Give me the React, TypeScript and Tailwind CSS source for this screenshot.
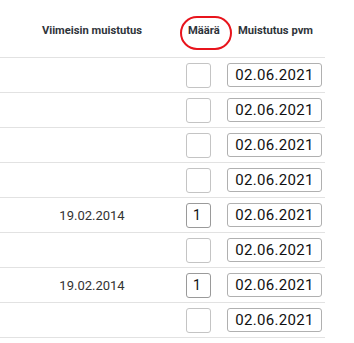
import React from "react";

const rows: { last: string; qty: string }[] = [
  { last: "", qty: "" },
  { last: "", qty: "" },
  { last: "", qty: "" },
  { last: "", qty: "" },
  { last: "19.02.2014", qty: "1" },
  { last: "", qty: "" },
  { last: "19.02.2014", qty: "1" },
  { last: "", qty: "" },
];

export default function App() {
  return (
    <div
      className="w-[354px] h-[343px] bg-white overflow-hidden"
      style={{ fontFamily: "Roboto, 'Liberation Sans', sans-serif" }}
    >
      <div className="w-[325px]">
        <div className="relative flex h-[58px] border-b border-[#e2e2e2] items-center text-[11.2px] font-bold text-[#2f343a]">
          <div className="w-[184px] text-center pt-[6px]">Viimeisin muistutus</div>
          <div className="w-[43px] pl-[4px] pt-[6px]">Määrä</div>
          <div className="w-[98px] text-center pt-[6px] pr-[1px]">Muistutus pvm</div>
          <div className="absolute left-[180px] top-[16px] w-[52px] h-[34px] rounded-[17px] border-[2.5px] border-[#e8141c]" />
        </div>
        {rows.map((r, i) => (
          <div key={i} className="flex h-[35px] border-b border-[#e2e2e2] items-center">
            <div className="w-[184px] text-center text-[13px] text-[#333] pt-[1px]">{r.last}</div>
            <div className="w-[43px] pl-[2px]">
              <div
                className={`w-[25px] h-[25px] rounded-[3px] border flex items-center pl-[6px] text-[14px] text-[#111] ${
                  r.qty ? "border-[#9a9a9a]" : "border-[#c4c4c4]"
                }`}
              >
                {r.qty}
              </div>
            </div>
            <div className="w-[98px]">
              <div className="w-[95px] h-[24px] rounded-[3px] border border-[#b0b0b0] flex items-center justify-center text-[15px] text-[#111] tracking-[0.3px]">
                02.06.2021
              </div>
            </div>
          </div>
        ))}
      </div>
    </div>
  );
}
